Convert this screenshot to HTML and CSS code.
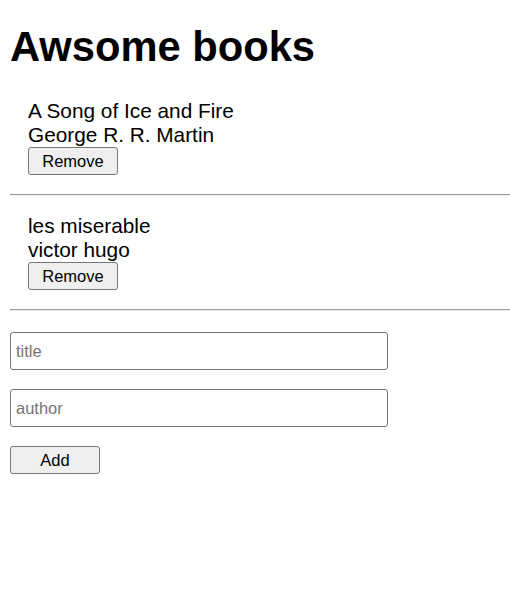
FILE: index.html
```html
<!DOCTYPE html>
<html lang="en">
<head>
<meta charset="utf-8">
<title>Awsome books</title>
<link rel="stylesheet" href="styles.css">
</head>
<body>
<h1 class="title">Awsome books</h1>
<div class="books">
  <div class="book">
    <p class="book-line">A Song of Ice and Fire</p>
    <p class="book-line">George R. R. Martin</p>
    <button class="btn" type="button">Remove</button>
  </div>
  <hr class="sep">
  <div class="book">
    <p class="book-line">les miserable</p>
    <p class="book-line">victor hugo</p>
    <button class="btn" type="button">Remove</button>
  </div>
  <hr class="sep">
</div>
<form class="form">
  <input class="field" type="text" placeholder="title">
  <input class="field" type="text" placeholder="author">
  <button class="btn" type="button">Add</button>
</form>
</body>
</html>
```

FILE: styles.css
```css
html, body {
  margin: 0;
  padding: 0;
  background: #fff;
}
body {
  padding-left: 10px;
  font-family: "Liberation Sans", Arial, sans-serif;
  color: #000;
}
.title {
  font-size: 41.7px;
  font-weight: bold;
  line-height: 48px;
  margin: 23px 0 10px;
}
.book {
  padding: 18px 18px 19px;
}
.book-line {
  margin: 0;
  font-size: 20.8px;
  line-height: 24px;
}
.btn {
  display: block;
  box-sizing: border-box;
  width: 90px;
  height: 28px;
  margin: 0;
  padding: 0;
  font-family: "Liberation Sans", Arial, sans-serif;
  font-size: 16.5px;
  color: #000;
  background: #efefef;
  border: 1px solid #767676;
  border-radius: 3px;
}
.sep {
  margin: 0;
  border: 0;
  border-top: 1px solid #9a9a9a;
  border-bottom: 1px solid #eeeeee;
  height: 0;
}
.form {
  display: flex;
  flex-direction: column;
  align-items: flex-start;
  gap: 19px;
  padding-top: 21px;
  margin: 0;
}
.field {
  box-sizing: border-box;
  width: 378px;
  height: 38px;
  margin: 0;
  padding: 0 5px;
  font-family: "Liberation Sans", Arial, sans-serif;
  font-size: 16.5px;
  border: 1px solid #767676;
  border-radius: 3px;
  color: #000;
  background: #fff;
}
.field::placeholder {
  color: #757575;
}
```
